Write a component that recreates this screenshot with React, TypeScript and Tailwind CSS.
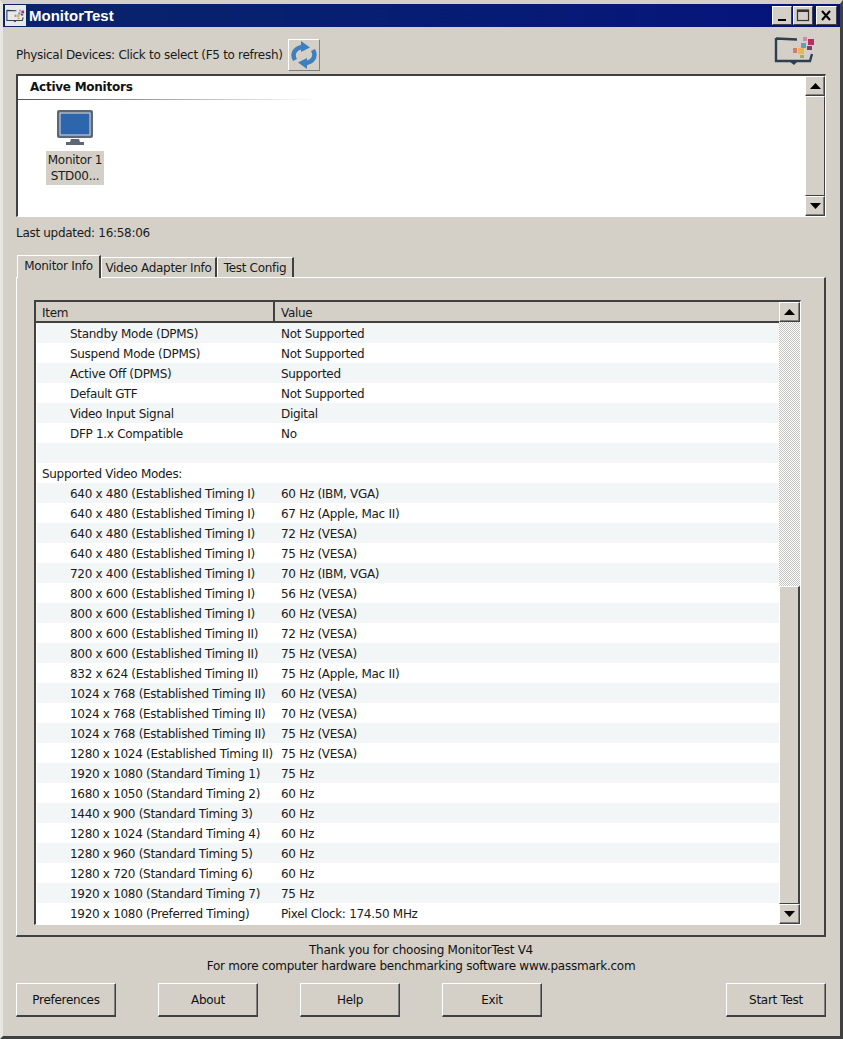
const rows: [string, string, boolean?][] = [
  ['Standby Mode (DPMS)', 'Not Supported'],
  ['Suspend Mode (DPMS)', 'Not Supported'],
  ['Active Off (DPMS)', 'Supported'],
  ['Default GTF', 'Not Supported'],
  ['Video Input Signal', 'Digital'],
  ['DFP 1.x Compatible', 'No'],
  ['', ''],
  ['Supported Video Modes:', '', true],
  ['640 x 480 (Established Timing I)', '60 Hz (IBM, VGA)'],
  ['640 x 480 (Established Timing I)', '67 Hz (Apple, Mac II)'],
  ['640 x 480 (Established Timing I)', '72 Hz (VESA)'],
  ['640 x 480 (Established Timing I)', '75 Hz (VESA)'],
  ['720 x 400 (Established Timing I)', '70 Hz (IBM, VGA)'],
  ['800 x 600 (Established Timing I)', '56 Hz (VESA)'],
  ['800 x 600 (Established Timing I)', '60 Hz (VESA)'],
  ['800 x 600 (Established Timing II)', '72 Hz (VESA)'],
  ['800 x 600 (Established Timing II)', '75 Hz (VESA)'],
  ['832 x 624 (Established Timing II)', '75 Hz (Apple, Mac II)'],
  ['1024 x 768 (Established Timing II)', '60 Hz (VESA)'],
  ['1024 x 768 (Established Timing II)', '70 Hz (VESA)'],
  ['1024 x 768 (Established Timing II)', '75 Hz (VESA)'],
  ['1280 x 1024 (Established Timing II)', '75 Hz (VESA)'],
  ['1920 x 1080 (Standard Timing 1)', '75 Hz'],
  ['1680 x 1050 (Standard Timing 2)', '60 Hz'],
  ['1440 x 900 (Standard Timing 3)', '60 Hz'],
  ['1280 x 1024 (Standard Timing 4)', '60 Hz'],
  ['1280 x 960 (Standard Timing 5)', '60 Hz'],
  ['1280 x 720 (Standard Timing 6)', '60 Hz'],
  ['1920 x 1080 (Standard Timing 7)', '75 Hz'],
  ['1920 x 1080 (Preferred Timing)', 'Pixel Clock: 174.50 MHz'],
]

const raised = 'border border-t-white border-l-white border-r-[#404040] border-b-[#404040] bg-[#d4d0c8]'

function Arrow({ down }: { down?: boolean }) {
  return (
    <svg width="11" height="6" viewBox="0 0 11 6" className={down ? 'rotate-180' : ''}>
      <path d="M5.5 0 L11 6 L0 6 Z" fill="#000" />
    </svg>
  )
}

function ScrollBtn({ down, cls }: { down?: boolean; cls: string }) {
  return (
    <div className={`${cls} flex shrink-0 items-center justify-center ${raised} shadow-[inset_-1px_-1px_0_#808080]`}>
      <Arrow down={down} />
    </div>
  )
}

function AppLogo({ w, h }: { w: number; h: number }) {
  return (
    <svg width={w} height={h} viewBox="0 0 42 30">
      <path d="M2 2.5 L23 3.5 M2 2 L2 25 L36 25 L38 18" fill="none" stroke="#2f3f52" strokeWidth="2.4" />
      <path d="M15 25 L24 25 L20 29 Z" fill="#2f3f52" />
      <rect x="29" y="1" width="4" height="4" fill="#c98bb0" />
      <rect x="34" y="3" width="6" height="6" fill="#b5305f" />
      <rect x="27" y="7" width="5" height="5" fill="#5aa3b8" />
      <rect x="33" y="10" width="5" height="4" fill="#74407f" />
      <rect x="19" y="12" width="4" height="5" fill="#d27a6c" />
      <rect x="24" y="12" width="6" height="6" fill="#e8b45e" />
      <rect x="26" y="19" width="4" height="3" fill="#9bb35a" />
    </svg>
  )
}

function WinBtn({ children, w }: { children: React.ReactNode; w: string }) {
  return (
    <div className={`flex h-[19px] items-center justify-center ${w} ${raised}`}>
      <svg width="15" height="13" viewBox="0 0 15 13">{children}</svg>
    </div>
  )
}

function Btn({ label, cls }: { label: string; cls: string }) {
  return (
    <div className={`flex h-[34px] w-[100px] items-center justify-center border border-t-white border-l-white border-r-[#404040] border-b-[#404040] border-b-2 shadow-[inset_-1px_0_0_#808080] text-[#111] ${cls}`}>
      {label}
    </div>
  )
}

export default function App() {
  return (
    <div className="flex h-[1039px] w-[843px] flex-col overflow-hidden border-[3px] border-t-4 border-t-[#d4d0c8] border-b-[#404040] border-l-[#e8e6e0] border-r-[#404040] bg-[#d4d0c8] font-['DejaVu_Sans',sans-serif] text-[12px] leading-4 text-[#1a1a1a]">
      {/* title bar */}
      <div className="flex h-[23px] shrink-0 items-center bg-gradient-to-r from-[#0a246a] to-[#06127c] pl-[2px] pr-[3px]">
        <div className="flex h-[21px] w-[21px] items-center justify-center bg-[#e8e8e8]">
          <AppLogo w={19} h={14} />
        </div>
        <span className="ml-[3px] font-['Liberation_Sans',sans-serif] text-[15px] font-bold text-white">MonitorTest</span>
        <div className="ml-auto flex items-center">
          <WinBtn w="w-[20px]"><rect x="3" y="10" width="8" height="2" fill="#000" /></WinBtn>
          <div className="w-[1px]" />
          <WinBtn w="w-[20px]"><rect x="1.5" y="1" width="11" height="10.5" fill="none" stroke="#333" strokeWidth="1.2" /><rect x="1" y="1" width="12" height="2" fill="#333" /></WinBtn>
          <div className="w-[3px]" />
          <WinBtn w="w-[21px]"><path d="M3 2 L11 11 M11 2 L3 11" stroke="#000" strokeWidth="2" /></WinBtn>
        </div>
      </div>

      <div className="flex min-h-0 flex-1 flex-col pl-[13px] pr-[14px]">
        {/* toolbar */}
        <div className="flex h-[47px] shrink-0 items-center pt-[8px]">
          <span className="tracking-[-0.3px]">Physical Devices: Click to select (F5 to refresh)</span>
          <div className={`ml-[5px] flex h-[32px] w-[32px] items-center justify-center ${raised} border-r-[#808080] border-b-[#808080]`}>
            <svg width="28" height="28" viewBox="0 0 28 28" fill="none" stroke="#3f7fbf" strokeWidth="4.5">
              <path d="M5 19 C1 12 6 6 14 6" />
              <path d="M23 9 C27 16 22 22 14 22" />
              <path d="M11 0 L20 6.5 L11 11 Z" fill="#3f7fbf" stroke="none" />
              <path d="M17 28 L8 21.5 L17 17 Z" fill="#3f7fbf" stroke="none" />
            </svg>
          </div>
          <div className="ml-auto mr-[10px] mt-[-7px]">
            <AppLogo w={42} h={30} />
          </div>
        </div>

        {/* active monitors */}
        <div className="flex h-[143px] shrink-0 border border-t-2 border-l-2 border-t-[#404040] border-l-[#404040] border-r-white border-b-white bg-white">
          <div className="min-w-0 flex-1">
            <div className="h-[23px] pl-[12px] pt-[2px] leading-[19px] font-bold text-[#111] tracking-[-0.25px]">Active Monitors</div>
            <div className="h-[1px] w-[300px] bg-gradient-to-r from-[#555] via-[#aaa] to-white" />
            <div className="ml-[28px] mt-[10px] flex w-[58px] flex-col items-center">
              <svg width="36" height="36" viewBox="0 0 36 36">
                <rect x="0" y="0" width="36" height="28" rx="2" fill="#5d6777" />
                <rect x="3" y="3" width="30" height="22" fill="#2e66ad" stroke="#d8dde6" strokeWidth="1" />
                <path d="M14 29 H22 L23 32 H27 V35 H9 V32 H13 Z" fill="#5d6777" />
              </svg>
              <div className="mt-[5px] h-[34px] w-[58px] bg-[#d4d0c8] pt-[1px] text-center tracking-[-0.3px]">Monitor 1<br />STD00...</div>
            </div>
          </div>
          <div className="flex w-[20px] shrink-0 flex-col">
            <ScrollBtn cls="h-[20px] w-[20px]" />
            <div className={`min-h-0 flex-1 ${raised}`} />
            <ScrollBtn cls="h-[20px] w-[20px]" down />
          </div>
        </div>

        <div className="h-[36px] shrink-0 pt-[8px] tracking-[-0.3px]">Last updated: 16:58:06</div>

        {/* tabs */}
        <div className="flex h-[24px] shrink-0 items-end pl-[1px]">
          <div className="relative z-10 -mb-[1px] flex h-[23px] w-[84px] items-start justify-center border-t border-l border-r-2 border-t-white border-l-white border-r-[#404040] bg-[#d4d0c8] pt-[2px] tracking-[-0.3px]">Monitor Info</div>
          <div className="flex h-[20px] w-[116px] items-center justify-center border-t border-l border-r-2 border-t-white border-l-white border-r-[#404040] tracking-[-0.3px]">Video Adapter Info</div>
          <div className="flex h-[20px] w-[77px] items-center justify-center border-t border-l border-r-2 border-t-white border-l-white border-r-[#404040] tracking-[-0.3px]">Test Config</div>
        </div>

        {/* tab panel */}
        <div className="h-[660px] shrink-0 border-t border-l border-r-2 border-b-2 border-t-white border-l-white border-r-[#404040] border-b-[#404040] pl-[17px] pr-[23px] pt-[22px]">
          <div className="flex h-[625px] border border-t-2 border-l-2 border-t-[#404040] border-l-[#404040] border-r-white border-b-white bg-white">
            <div className="min-w-0 flex-1">
              <div className="flex h-[21px] border-b-2 border-b-[#404040] bg-[#d4d0c8] leading-[23px]">
                <div className="w-[239px] border-r-2 border-r-[#404040] pl-[6px] tracking-[-0.3px]">Item</div>
                <div className="pl-[6px] tracking-[-0.3px]">Value</div>
              </div>
              {rows.map(([item, value, head], i) => (
                <div key={i} className={`ml-[1px] flex h-[20px] items-center pt-[1px] tracking-[-0.3px] whitespace-nowrap ${i % 2 === 0 ? 'bg-[#f3f6f6]' : 'bg-white'}`}>
                  <div className={`w-[238px] shrink-0 ${head ? 'pl-[5px]' : 'pl-[33px]'}`}>{item}</div>
                  <div className="pl-[6px]">{value}</div>
                </div>
              ))}
            </div>
            {/* scrollbar */}
            <div className="flex w-[21px] shrink-0 flex-col">
              <ScrollBtn cls="h-[20px] w-[21px]" />
              <div className="h-[264px] bg-[repeating-conic-gradient(#c4c2bc_0_25%,#ffffff_0_50%)] bg-[length:2px_2px]" />
              <div className={`h-[318px] border-r-2 ${raised}`} />
              <ScrollBtn cls="h-[20px] w-[21px]" down />
            </div>
          </div>
        </div>

        {/* footer */}
        <div className="h-[38px] shrink-0 pt-[5px] text-center tracking-[-0.25px] text-[#111]">
          Thank you for choosing MonitorTest V4<br />
          For more computer hardware benchmarking software www.passmark.com
        </div>
        <div className="mt-[8px] flex tracking-[-0.3px]">
          <Btn label="Preferences" cls="mr-[42px]" />
          <Btn label="About" cls="mr-[42px]" />
          <Btn label="Help" cls="mr-[42px]" />
          <Btn label="Exit" cls="" />
          <Btn label="Start Test" cls="ml-auto" />
        </div>
      </div>
    </div>
  )
}
